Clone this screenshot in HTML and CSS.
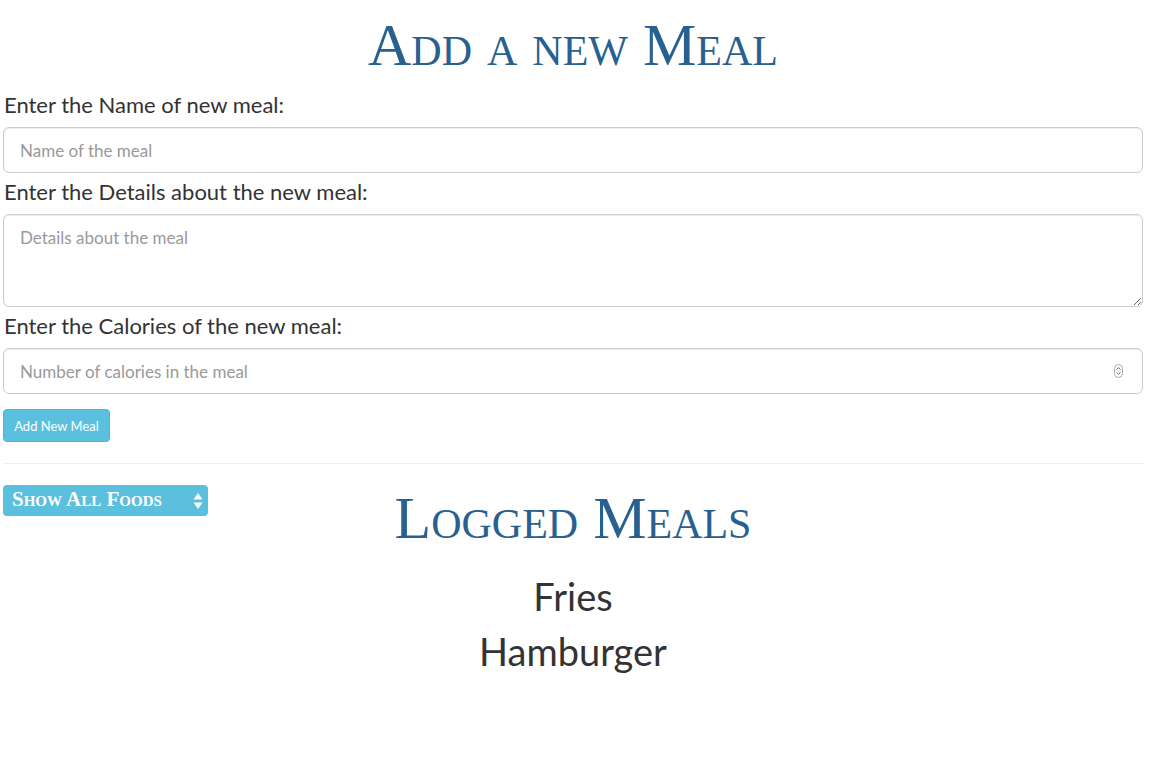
FILE: index.html
```html
<!DOCTYPE html>
<html>
<head>
<meta charset="utf-8">
<link rel="stylesheet" href="styles.css">
</head>
<body>
<div class="page">
  <h1 class="title">Add a new Meal</h1>
  <form class="meal-form">
    <label class="field-label" for="name">Enter the Name of new meal:</label>
    <input class="field" id="name" type="text" placeholder="Name of the meal">
    <label class="field-label" for="details">Enter the Details about the new meal:</label>
    <textarea class="field area" id="details" placeholder="Details about the meal"></textarea>
    <label class="field-label" for="cal">Enter the Calories of the new meal:</label>
    <div class="number-wrap">
      <input class="field" id="cal" type="text" placeholder="Number of calories in the meal">
      <svg class="spinner" width="9" height="14" viewBox="0 0 9 14">
        <rect x="0.5" y="0.5" width="8" height="13" rx="4" fill="#fff" stroke="#aaa"/>
        <path d="M2.6 5.6 L4.5 3.6 L6.4 5.6" fill="none" stroke="#666" stroke-width="1"/>
        <path d="M2.6 8.4 L4.5 10.4 L6.4 8.4" fill="none" stroke="#666" stroke-width="1"/>
      </svg>
    </div>
    <button class="btn" type="button">Add New Meal</button>
  </form>
  <hr class="rule">
  <section class="logged">
    <div class="select">
      <span class="select-text">Show All Foods</span>
      <svg class="select-arrows" width="10" height="18" viewBox="0 0 10 18">
        <path d="M0.5 7.5 L5 1 L9.5 7.5 Z" fill="#fff"/>
        <path d="M0.5 10.5 L5 17 L9.5 10.5 Z" fill="#fff"/>
      </svg>
    </div>
    <div class="logged-main">
      <h1 class="title">Logged Meals</h1>
      <ul class="meals">
        <li>Fries</li>
        <li>Hamburger</li>
      </ul>
    </div>
  </section>
</div>
</body>
</html>
```
FILE: styles.css
```css
html, body {
  margin: 0;
  padding: 0;
  background: #fff;
}
body {
  font-family: Lato, "Open Sans", sans-serif;
  color: #333;
}
.page {
  width: 1140px;
  padding: 0 8px 0 3px;
}
.title {
  font-family: "Liberation Serif", "DejaVu Serif", serif;
  font-variant: small-caps;
  font-weight: normal;
  font-size: 60px;
  line-height: 66px;
  color: #286090;
  text-align: center;
  margin: 12px 0 0;
}
.meal-form {
  display: flex;
  flex-direction: column;
  margin-top: 15px;
}
.field-label {
  font-size: 22px;
  line-height: 24px;
  margin-bottom: 10px;
  padding-left: 1px;
}
.field {
  box-sizing: border-box;
  width: 1140px;
  height: 46px;
  padding: 10px 16px;
  font-family: Lato, "Open Sans", sans-serif;
  font-size: 17px;
  color: #555;
  border: 1px solid #ccc;
  border-radius: 6px;
  box-shadow: inset 0 1px 1px rgba(0,0,0,0.075);
  outline: none;
  margin: 0 0 7px;
}
.field::placeholder {
  color: #999;
}
.area {
  height: 93px;
  padding-top: 12px;
  resize: vertical;
}
.number-wrap {
  position: relative;
  display: flex;
}
.spinner {
  position: absolute;
  right: 20px;
  top: 16px;
}
.btn {
  align-self: flex-start;
  margin-top: 8px;
  width: 107px;
  height: 33px;
  padding: 0;
  font-family: Lato, "Open Sans", sans-serif;
  font-size: 13px;
  color: #fff;
  background: #5bc0de;
  border: 1px solid #46b8da;
  border-radius: 4px;
}
.rule {
  margin: 21px 0 21px;
  border: 0;
  border-top: 1px solid #eee;
  height: 0;
}
.logged {
  display: grid;
  grid-template-columns: 1fr;
}
.select,
.logged-main {
  grid-area: 1 / 1;
}
.select {
  position: relative;
  z-index: 1;
  justify-self: start;
  align-self: start;
  box-sizing: border-box;
  width: 205px;
  height: 31px;
  background: #5bc0de;
  border-radius: 4px;
  display: flex;
  align-items: center;
  justify-content: space-between;
  padding: 0 5px 0 9px;
  color: #fff;
  font-family: "Liberation Serif", "DejaVu Serif", serif;
  font-variant: small-caps;
  font-weight: bold;
  font-size: 21px;
}
.select-text {
  line-height: 31px;
  margin-top: -2px;
}
.logged-main {
  display: flex;
  flex-direction: column;
}
.logged-main .title {
  margin-top: 0;
}
.meals {
  list-style: none;
  margin: 18px 0 0;
  padding: 0;
  text-align: center;
  font-size: 38px;
  line-height: 55px;
  color: #333;
}
```
